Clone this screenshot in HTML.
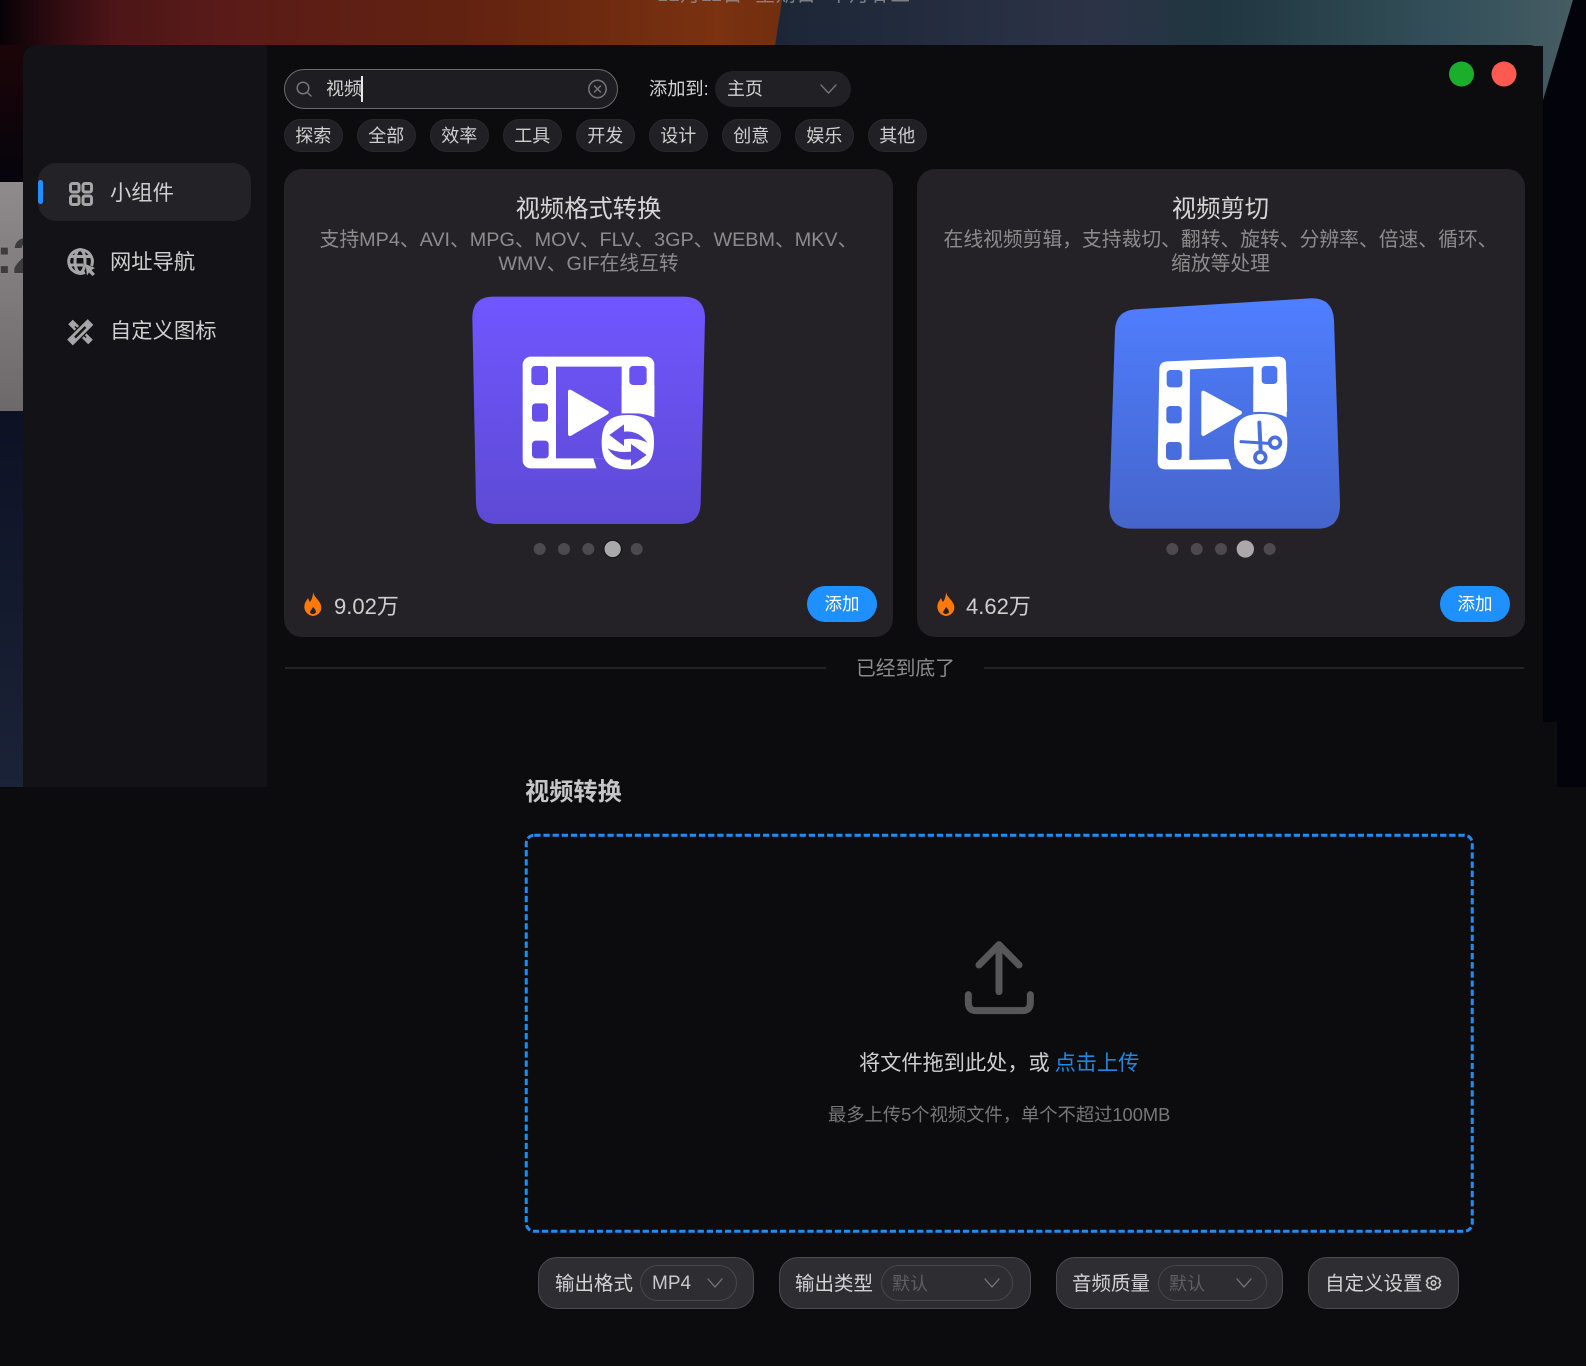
<!DOCTYPE html>
<html lang="zh-CN"><head><meta charset="utf-8"><title>视频</title>
<style>
html,body{margin:0;padding:0;background:#0c0b0e}
body{position:relative;width:1586px;height:1366px;overflow:hidden;font-family:"Liberation Sans","Noto Sans CJK SC",sans-serif;color:#c9c9c9}
.a{position:absolute;box-sizing:border-box}
.t{position:absolute;white-space:nowrap}
.chip{position:absolute;top:119px;width:58.500px;height:33px;border-radius:17px;background:#212024;border:1px solid #29282c;box-sizing:border-box;text-align:center;line-height:32px;font-size:18px;color:#cfcfcf}
.card{position:absolute;top:169px;width:609px;height:468px;border-radius:18px;background:#242226}
.ctitle{position:absolute;left:0;right:0;top:194px;text-align:center;font-size:24.300px;line-height:32px;color:#d6d6d6;white-space:nowrap}
.d{position:absolute;text-align:center;font-size:19.800px;line-height:24px;color:#8c8c8e;white-space:nowrap}
.btn{position:absolute;top:586px;width:70px;height:36px;border-radius:18px;background:#1e90ff;color:#fff;font-size:17.500px;line-height:36px;text-align:center}
.pill{position:absolute;top:1257px;height:52px;border-radius:19px;background:#2e2d31;border:1.500px solid #4b4a4e;box-sizing:border-box}
.in{position:absolute;top:1265px;height:36px;border-radius:18px;border:1.500px solid #47464a;box-sizing:border-box}
.pt{position:absolute;top:1269px;font-size:19.500px;line-height:30px;color:#d2d2d2;white-space:nowrap}
</style></head><body>

<svg class="a" style="left:0;top:0" width="1586" height="800" viewBox="0 0 1586 800">
<defs>
<linearGradient id="l" x1="0" x2="1"><stop offset="0" stop-color="#070206"/><stop offset=".06" stop-color="#2a0a10"/><stop offset=".14" stop-color="#4c1517"/><stop offset=".28" stop-color="#5a1b18"/><stop offset=".6" stop-color="#632310"/><stop offset=".9" stop-color="#7a3210"/><stop offset="1" stop-color="#6f2d10"/></linearGradient>
<linearGradient id="r" x1="0" x2="1"><stop offset="0" stop-color="#1c2636"/><stop offset=".4" stop-color="#2c3347"/><stop offset=".55" stop-color="#203640"/><stop offset=".85" stop-color="#34505a"/><stop offset="1" stop-color="#465c63"/></linearGradient>
<linearGradient id="g" x1="0" x2="0" y1="0" y2="1"><stop offset="0" stop-color="#8f8b8d"/><stop offset="1" stop-color="#6d696b"/></linearGradient>
<linearGradient id="n" x1="0" x2="0" y1="0" y2="1"><stop offset="0" stop-color="#0d1124"/><stop offset="1" stop-color="#1b2338"/></linearGradient>
<linearGradient id="s" x1="0" x2="0" y1="0" y2="1"><stop offset="0" stop-color="#1c0508"/><stop offset="1" stop-color="#05040c"/></linearGradient>
</defs>
<rect x="0" y="0" width="1586" height="800" fill="#0c0b0e"/>
<rect x="0" y="0" width="800" height="46" fill="url(#l)"/>
<polygon points="782,0 1573,0 1543,107 1543,46 775,46" fill="url(#r)"/>
<polygon points="1573,0 1586,0 1586,787 1557,787 1557,722 1541,722 1541,107" fill="#03030c"/>
<rect x="0" y="45" width="24" height="137" fill="url(#s)"/>
<rect x="0" y="182" width="24" height="229" fill="url(#g)"/>
<rect x="0" y="411" width="24" height="376" fill="url(#n)"/>
<text x="-4" y="273" font-size="50" font-weight="700" fill="#3c3b3e" font-family="Liberation Sans">:2</text>
</svg>

<div class="t" style="left:657px;top:-18px;font-size:20px;letter-spacing:.5px;line-height:26px;color:#9a9a9a;opacity:.75;white-space:pre">12月11日  星期日  十月廿三</div>

<div class="a" style="left:23px;top:45px;width:1520px;height:742px;background:#0c0b0e;border-radius:14px 14px 0 0"></div>
<div class="a" style="left:23px;top:45px;width:244px;height:742px;background:#131216;border-radius:14px 0 0 0"></div>
<div class="a" style="left:38px;top:163px;width:213px;height:58px;background:#232226;border-radius:18px"></div>
<div class="a" style="left:38px;top:180px;width:5px;height:24px;background:#1e90ff;border-radius:3px"></div>

<div class="t" style="left:110px;top:178px;font-size:21.300px;line-height:30px;color:#cfcfcf">小组件</div>
<div class="t" style="left:110px;top:247px;font-size:21.300px;line-height:30px;color:#cfcfcf">网址导航</div>
<div class="t" style="left:110px;top:316px;font-size:21.300px;line-height:30px;color:#cfcfcf">自定义图标</div>

<div class="a" style="left:284px;top:69px;width:334px;height:40px;border-radius:20px;background:#1e1d21;border:1.500px solid #6b6b6e"></div>
<div class="t" style="left:326px;top:74px;font-size:18px;line-height:30px;color:#d2d2d2">视频</div>
<div class="a" style="left:361px;top:76px;width:1.500px;height:26px;background:#e8e8e8"></div>
<div class="t" style="left:649px;top:74px;font-size:18.200px;line-height:30px;color:#d2d2d2">添加到:</div>
<div class="a" style="left:715px;top:71px;width:136px;height:36px;border-radius:18px;background:#212024"></div>
<div class="t" style="left:727px;top:74px;font-size:18px;line-height:30px;color:#d2d2d2">主页</div>

<div class="chip" style="left:284px">探索</div>
<div class="chip" style="left:357px">全部</div>
<div class="chip" style="left:430px">效率</div>
<div class="chip" style="left:503px">工具</div>
<div class="chip" style="left:576px">开发</div>
<div class="chip" style="left:649px">设计</div>
<div class="chip" style="left:722px">创意</div>
<div class="chip" style="left:795px">娱乐</div>
<div class="chip" style="left:868px">其他</div>

<div class="card" style="left:284px"></div>
<div class="card" style="left:916.500px;width:608.500px"></div>

<div class="ctitle" style="left:284px;width:609px">视频格式转换</div>
<div class="ctitle" style="left:916px;width:609px">视频剪切</div>
<div class="d" style="left:284px;width:609px;top:228px">支持MP4、AVI、MPG、MOV、FLV、3GP、WEBM、MKV、</div>
<div class="d" style="left:284px;width:609px;top:252px">WMV、GIF在线互转</div>
<div class="d" style="left:916px;width:609px;top:228px">在线视频剪辑，支持裁切、翻转、旋转、分辨率、倍速、循环、</div>
<div class="d" style="left:916px;width:609px;top:252px">缩放等处理</div>

<div class="t" style="left:334px;top:592px;font-size:22px;line-height:30px;color:#cfcfcf">9.02万</div>
<div class="t" style="left:966px;top:592px;font-size:22px;line-height:30px;color:#cfcfcf">4.62万</div>
<div class="btn" style="left:807px">添加</div>
<div class="btn" style="left:1440px">添加</div>

<div class="a" style="left:285px;top:667px;width:541px;height:1.500px;background:#232226"></div>
<div class="a" style="left:984px;top:667px;width:540px;height:1.500px;background:#232226"></div>
<div class="t" style="left:856px;top:654px;font-size:19.800px;line-height:30px;color:#8c8c8e">已经到底了</div>

<div class="t" style="left:525px;top:778px;font-size:24.200px;font-weight:700;line-height:30px;color:#c6c6c6">视频转换</div>

<div class="t" style="left:859px;top:1049px;font-size:21.200px;line-height:30px;color:#cfcfcf">将文件拖到此处，或 <span style="color:#1e88e5;margin-left:-1px">点击上传</span></div>
<div class="t" style="left:828px;top:1100px;font-size:18.300px;line-height:30px;color:#77777a">最多上传5个视频文件，单个不超过100MB</div>

<div class="pill" style="left:538px;width:216px"></div>
<div class="in" style="left:640px;width:97px"></div>
<div class="pt" style="left:555px">输出格式</div>
<div class="pt" style="left:652px;font-size:19px;color:#c9c9c9">MP4</div>
<div class="pill" style="left:779px;width:252px"></div>
<div class="in" style="left:881px;width:132px"></div>
<div class="pt" style="left:795px">输出类型</div>
<div class="pt" style="left:892px;font-size:18px;color:#5f5e62">默认</div>
<div class="pill" style="left:1056px;width:227px"></div>
<div class="in" style="left:1158px;width:109px"></div>
<div class="pt" style="left:1072px">音频质量</div>
<div class="pt" style="left:1169px;font-size:18px;color:#5f5e62">默认</div>
<div class="pill" style="left:1308px;width:151px"></div>
<div class="pt" style="left:1325px">自定义设置</div>

<svg class="a" style="left:0;top:0" width="1586" height="1366" viewBox="0 0 1586 1366">
<defs>
<linearGradient id="p1" gradientUnits="userSpaceOnUse" x1="0" x2="0" y1="50" y2="732"><stop offset="0" stop-color="#7056ff"/><stop offset="1" stop-color="#5d4ad4"/></linearGradient>
<linearGradient id="p2" gradientUnits="userSpaceOnUse" x1="0" x2="0" y1="55" y2="746"><stop offset="0" stop-color="#4f7eff"/><stop offset="1" stop-color="#4565cb"/></linearGradient>
</defs>

<circle cx="1461.500" cy="74" r="12.500" fill="#1bae2d"/>
<circle cx="1504" cy="74" r="12.500" fill="#ff5a52"/>

<g fill="none" stroke="#77777a" stroke-width="1.500" stroke-linecap="round"><circle cx="303" cy="88" r="5.800"/><path d="M307.500 92.500 L311 96"/></g>
<g fill="none" stroke="#77777a" stroke-width="1.500"><circle cx="597.500" cy="89" r="8.700"/><path d="M594.500 86 L600.500 92 M600.500 86 L594.500 92" stroke-linecap="round"/></g>
<g fill="none" stroke="#77777a" stroke-width="1.300" stroke-linecap="round" stroke-linejoin="round">
<path d="M821 85 L828.500 93 L836 85"/>
<path d="M708 1279 L715 1287 L722 1279"/>
<path d="M985 1279 L992 1287 L999 1279"/>
<path d="M1237 1279 L1244 1287 L1251 1279"/>
</g>

<g fill="none" stroke="#a6a6a8" stroke-width="3">
<rect x="70.500" y="183.500" width="8.500" height="8.500" rx="2"/>
<rect x="83" y="183.500" width="8.500" height="8.500" rx="2"/>
<rect x="70.500" y="196" width="8.500" height="8.500" rx="2"/>
<rect x="83" y="196" width="8.500" height="8.500" rx="2"/>
</g>
<g fill="none" stroke="#a6a6a8" stroke-width="3">
<path d="M91.500 266 A11.800 11.800 0 1 0 85 272.500"/>
<ellipse cx="80" cy="261" rx="5" ry="11.500"/>
<path d="M69 256.500 H91 M69 265 H83"/>
</g>
<path d="M85.500 264 L95 268 L91.500 270 L95 274 L92.500 276 L89 272.500 L87 275.500Z" fill="#a6a6a8"/>
<g fill="none" stroke-linecap="butt">
<path d="M70.500 322 L90.500 342" stroke="#a6a6a8" stroke-width="6.500"/>
<path d="M75 326.500 L86 337.500" stroke="#131216" stroke-width="1.500"/>
<path d="M70 342.500 L90.500 322" stroke="#131216" stroke-width="10.500"/>
<path d="M70 342.500 L90.500 322" stroke="#a6a6a8" stroke-width="8"/>
<path d="M75 337.500 L85.500 327" stroke="#131216" stroke-width="2.500"/>
</g>

<g transform="translate(450 280) scale(.33333)">
<path d="M130,50 L700,50 Q765,50 765,115 L752,670 Q750,732 690,732 L140,732 Q80,732 78,670 L67,115 Q67,50 130,50Z" fill="url(#p1)"/>
<rect x="218" y="230" width="395" height="335" rx="24" fill="#fff"/>
<path d="M318,260 H515 V535 H318Z" fill="url(#p1)"/>
<g fill="url(#p1)">
<rect x="244" y="258" width="50" height="57" rx="11"/><rect x="246" y="370" width="48" height="55" rx="11"/><rect x="246" y="482" width="50" height="53" rx="11"/><rect x="538" y="258" width="52" height="57" rx="11"/>
</g>
<path d="M360,335 L470,398 L360,462Z" fill="#fff" stroke="#fff" stroke-width="12" stroke-linejoin="round"/>
<path d="M515 400 H640 V590 H447 L430 535 H515Z" fill="url(#p1)"/>
<path d="M515,315 H613 V412 Q570,395 515,400Z" fill="#fff"/>
<path d="M533,405 C590,405 612,430 612,487 C612,545 590,568 533,568 C477,568 455,545 455,487 C455,430 477,405 533,405Z" fill="#fff"/>
<path d="M478,465 L522,433 L522,455 Q565,450 592,488 Q560,472 522,478 L522,498Z" fill="url(#p1)"/>
<path d="M590,525 L543,558 L543,538 Q500,545 473,505 Q505,520 543,515 L543,492Z" fill="url(#p1)"/>
<circle cx="269" cy="807" r="18" fill="#4b4b4d"/><circle cx="342" cy="807" r="18" fill="#4b4b4d"/><circle cx="415" cy="807" r="18" fill="#4b4b4d"/><circle cx="560" cy="807" r="18" fill="#4b4b4d"/>
<circle cx="488" cy="807" r="26" fill="#a9a9ab" stroke="#111" stroke-width="3"/>
</g>

<g transform="translate(1090 280) scale(.33333)">
<path d="M135,88 L660,55 Q728,52 732,120 L750,670 Q752,745 685,746 L125,746 Q58,745 58,680 L75,150 Q78,92 135,88Z" fill="url(#p2)"/>
<path d="M232,244 L565,230 Q588,230 588,252 L592,415 V568 H225 Q203,568 203,545 L208,268 Q208,245 232,244Z" fill="#fff"/>
<path d="M300,268 L490,260 V535 L298,540Z" fill="url(#p2)"/>
<g fill="url(#p2)">
<rect x="230" y="270" width="47" height="52" rx="11"/><rect x="229" y="378" width="46" height="52" rx="11"/><rect x="228" y="486" width="47" height="54" rx="11"/><rect x="515" y="258" width="47" height="54" rx="11"/>
</g>
<path d="M340,338 L450,398 L340,462Z" fill="#fff" stroke="#fff" stroke-width="12" stroke-linejoin="round"/>
<path d="M490 395 H620 V585 H430 L415 537 H490Z" fill="url(#p2)"/>
<path d="M490,312 H590 V412 Q550,392 490,396Z" fill="#fff"/>
<path d="M512,402 C570,402 592,425 592,484 C592,545 570,568 512,568 C455,568 432,545 432,484 C432,425 455,402 512,402Z" fill="#fff"/>
<g fill="none" stroke="url(#p2)" stroke-linecap="round">
<path d="M453,485 L535,490" stroke-width="9"/><path d="M508,428 L512,512" stroke-width="12"/>
<circle cx="555" cy="488" r="16" stroke-width="11"/><circle cx="511" cy="532" r="16" stroke-width="11"/>
</g>
<circle cx="247" cy="807" r="18" fill="#4b4b4d"/><circle cx="320" cy="807" r="18" fill="#4b4b4d"/><circle cx="393" cy="807" r="18" fill="#4b4b4d"/><circle cx="539" cy="807" r="18" fill="#4b4b4d"/>
<circle cx="466" cy="807" r="26" fill="#a9a9ab"/>
</g>

<path transform="translate(303 592)" fill="#ff7a0a" fill-rule="evenodd" d="M10,0 C11,5 15,7 17,11 C20,16 18,23 10,24 C3,23 0,17 2,11 C3,9 4,8 5,6 C6,8 6,9 7,10 C9,7 10,4 10,0Z M10,15 C11,16 13,18 13,20 C13,21 11,22 10,22 C8,22 7,21 7,20 C8,18 9,17 10,15Z"/>
<path transform="translate(936 592)" fill="#ff7a0a" fill-rule="evenodd" d="M10,0 C11,5 15,7 17,11 C20,16 18,23 10,24 C3,23 0,17 2,11 C3,9 4,8 5,6 C6,8 6,9 7,10 C9,7 10,4 10,0Z M10,15 C11,16 13,18 13,20 C13,21 11,22 10,22 C8,22 7,21 7,20 C8,18 9,17 10,15Z"/>

<rect x="526.250" y="835.250" width="946" height="396" rx="8" fill="none" stroke="#1e8ef5" stroke-width="3" stroke-dasharray="6.300 2.850"/>

<g transform="translate(800 920) scale(.33333)" fill="none" stroke="#57575a" stroke-width="21" stroke-linecap="round" stroke-linejoin="round">
<path d="M597 215 V76"/><path d="M537 135 L597 74 L657 135"/>
<path d="M505 224 V248 Q505 272 529 272 H667 Q691 272 691 248 V224"/>
</g>

<g fill="none" stroke="#cfcfcf" stroke-width="1.500" stroke-linejoin="round">
<path d="M1431.500 1276.500 L1435.500 1276.500 L1436.300 1278.500 L1438.500 1278 L1440.500 1281.300 L1439 1283 L1440.500 1284.700 L1438.500 1288 L1436.300 1287.500 L1435.500 1289.500 L1431.500 1289.500 L1430.700 1287.500 L1428.500 1288 L1426.500 1284.700 L1428 1283 L1426.500 1281.300 L1428.500 1278 L1430.700 1278.500Z"/>
<circle cx="1433.500" cy="1283" r="2.200"/>
</g>
</svg>
</body></html>
